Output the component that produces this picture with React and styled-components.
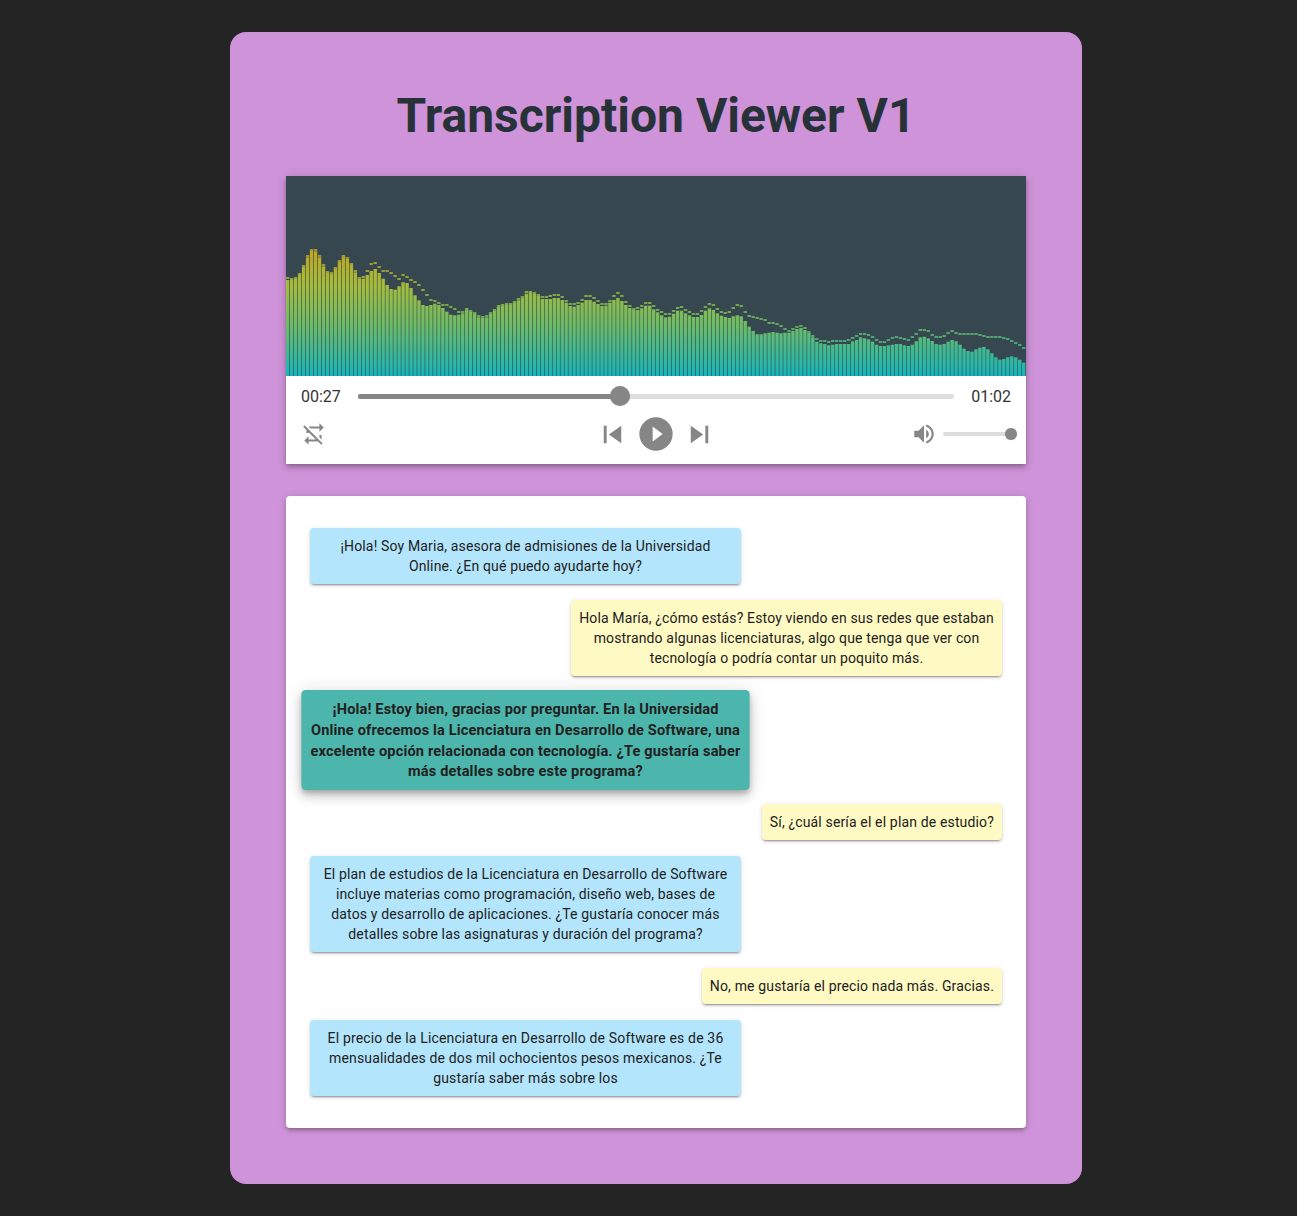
import styled, { createGlobalStyle } from "styled-components";

const GlobalStyle = createGlobalStyle`
  html, body { margin: 0; padding: 0; }
  body {
    background: #242424;
    font-family: Roboto, "Liberation Sans", Arial, sans-serif;
    color: #212121;
  }
`;

const barHeights = [
  96, 97.7, 99, 103.3, 111, 120.7, 127.3, 126.7, 120.7, 111.7, 105, 104, 109, 116, 121.3, 119, 113.3, 105.7, 97.3, 97.3,
  101, 105, 107, 103, 97.3, 91, 87, 86.3, 89.7, 93.7, 93, 88, 80.7, 75.7, 71, 70, 71, 72.3, 71, 68,
  64.3, 61.3, 60.7, 61.3, 64.7, 68, 66.3, 64.7, 61.3, 60, 60, 64, 67, 71, 72.3, 73.3, 73.3, 75, 77.7, 79.3,
  82.3, 83.3, 82, 80, 77, 77, 77, 78, 78, 76, 73.3, 70, 69.3, 71, 73.3, 76, 76, 74.3, 72, 70,
  70.3, 73.3, 76, 78, 75, 71, 68, 66, 66, 67.7, 70.3, 70.3, 66.7, 63.7, 60.7, 58.7, 59.3, 62.3, 65.3, 65.3,
  62.7, 60.7, 59, 59, 61, 65.3, 67.7, 66, 62.7, 60.3, 59, 58, 59.7, 60.7, 59.7, 55, 49.3, 45, 41.7, 41.7,
  42.7, 43.3, 44, 43.3, 42.7, 43.3, 43.3, 45, 47, 48, 46, 44, 38.7, 34.3, 32.7, 32, 30.7, 31.3, 32, 32,
  32, 32, 34.7, 36, 38.7, 37.7, 36.7, 34.3, 31.3, 30, 30, 30.7, 31.3, 32, 32, 30.7, 30, 31.3, 34.7, 38.7,
  39.3, 37.7, 35, 32, 31.3, 32, 34.3, 36, 34.7, 31.3, 27.3, 25, 24.3, 26.7, 28.3, 29, 26.7, 22.7, 18.7, 16.3,
  17, 18.7, 19.7, 18.7, 16.3, 13.3,
];

const capHeights = [
  99.3, 98.3, 99, 103.3, 111, 120.7, 127.3, 126.7, 120.7, 111.7, 105, 104, 109, 116, 121.3, 119, 113.3, 105.7, 99, 100,
  106.3, 112.7, 114.3, 109.7, 105.7, 106.3, 104, 100.7, 98.3, 101.7, 100, 97, 95.3, 92.3, 87.3, 82, 76.7, 75.7, 74, 72,
  72, 70, 68, 64.7, 64.7, 68, 66, 64, 60.7, 60, 60.7, 64, 67, 71, 72.3, 73.3, 73.3, 75, 77.7, 80,
  85, 85.3, 84.3, 82, 80, 79.7, 80.7, 82, 82, 80.3, 76.3, 73.3, 72.7, 74.3, 77.3, 80.7, 80.7, 79, 76, 72.7,
  72.7, 76.3, 81.3, 83.7, 80.7, 74.7, 71, 68, 68.7, 71, 74, 74, 71, 67, 64.7, 63, 63, 66.3, 68.7, 69.7,
  67.3, 64.7, 63, 63, 66.3, 70.3, 73.3, 72, 68, 65.3, 64, 64.7, 68.7, 72, 71.3, 65.3, 61, 60, 59, 58.3,
  57, 54.3, 53.7, 53, 50.7, 48, 46, 47.7, 50, 50.7, 49, 45, 41.3, 38, 36.3, 35.7, 34.7, 35.7, 36.3, 36.3,
  36.3, 37.3, 38.7, 41, 42.7, 42.7, 42, 39.7, 36.7, 34.7, 34.7, 37.3, 38.7, 39.7, 38.7, 38, 37.3, 39.7, 43.3, 46.7,
  46.7, 46, 42, 39.7, 40.3, 41.3, 44, 46, 44, 43.3, 43.3, 43, 42.7, 42.7, 42, 41, 40.3, 40.3, 40.3, 39.7,
  38.7, 38, 35.7, 34.3, 31.7, 29,
];

const messages = [
  { side: "agent", text: "¡Hola! Soy Maria, asesora de admisiones de la Universidad Online. ¿En qué puedo ayudarte hoy?" },
  { side: "client", text: "Hola María, ¿cómo estás? Estoy viendo en sus redes que estaban mostrando algunas licenciaturas, algo que tenga que ver con tecnología o podría contar un poquito más." },
  { side: "agent", active: true, text: "¡Hola! Estoy bien, gracias por preguntar. En la Universidad Online ofrecemos la Licenciatura en Desarrollo de Software, una excelente opción relacionada con tecnología. ¿Te gustaría saber más detalles sobre este programa?" },
  { side: "client", text: "Sí, ¿cuál sería el el plan de estudio?" },
  { side: "agent", text: "El plan de estudios de la Licenciatura en Desarrollo de Software incluye materias como programación, diseño web, bases de datos y desarrollo de aplicaciones. ¿Te gustaría conocer más detalles sobre las asignaturas y duración del programa?" },
  { side: "client", text: "No, me gustaría el precio nada más. Gracias." },
  { side: "agent", text: "El precio de la Licenciatura en Desarrollo de Software es de 36 mensualidades de dos mil ochocientos pesos mexicanos. ¿Te gustaría saber más sobre los" },
];

const Page = styled.div`
  display: flex;
  justify-content: center;
  padding: 32px 0 32px 15px;
`;

const Card = styled.main`
  width: 740px;
  padding: 56px;
  background: #ce93d8;
  border-radius: 16px;
`;

const Title = styled.h1`
  margin: 0 0 32px;
  font-size: 48px;
  line-height: 56px;
  font-weight: 700;
  text-align: center;
  color: #263238;
`;

const Player = styled.section`
  background: #fff;
  box-shadow: 0 2px 4px -1px rgba(0, 0, 0, 0.2), 0 4px 5px rgba(0, 0, 0, 0.14), 0 1px 10px rgba(0, 0, 0, 0.12);
  margin-bottom: 32px;
`;

const Spectrum = styled.svg`
  display: block;
  width: 740px;
  height: 200px;
  background: #37474f;
`;

const Controls = styled.div`
  display: flex;
  flex-direction: column;
  gap: 8px;
  padding: 10px 15px;
`;

const ProgressRow = styled.div`
  display: flex;
  align-items: center;
  height: 20px;
`;

const Time = styled.span`
  margin-top: 2px;
  font-size: 16px;
  line-height: 20px;
  color: #333;
`;

const Track = styled.div`
  position: relative;
  flex: 1;
  height: ${(p) => (p.$thin ? 4 : 5)}px;
  margin: 0 ${(p) => (p.$thin ? 0 : 17)}px;
  background: #ddd;
  border-radius: 2px;
`;

const Filled = styled.div`
  height: 100%;
  background: #868686;
  border-radius: 2px;
`;

const Thumb = styled.div`
  position: absolute;
  top: 50%;
  width: ${(p) => p.$size}px;
  height: ${(p) => p.$size}px;
  margin: ${(p) => -p.$size / 2}px 0 0 ${(p) => -p.$size / 2}px;
  background: #868686;
  border-radius: 50%;
  box-shadow: 0 0 1px rgba(134, 134, 134, 0.5);
`;

const ButtonRow = styled.div`
  display: flex;
  align-items: center;
  height: 40px;
`;

const Side = styled.div`
  flex: 1;
  display: flex;
  align-items: center;
  justify-content: ${(p) => (p.$end ? "flex-end" : "flex-start")};
`;

const Main = styled.div`
  display: flex;
  align-items: center;
  gap: 6px;
`;

const IconButton = styled.button`
  display: block;
  width: ${(p) => p.$size}px;
  height: ${(p) => p.$size}px;
  padding: 0;
  border: 0;
  background: none;
  color: #868686;
  cursor: pointer;
  svg {
    display: block;
    width: 100%;
    height: 100%;
    fill: currentColor;
  }
`;

const Volume = styled.div`
  display: flex;
  align-items: center;
  gap: 6px;
  width: 100px;
`;

const Chat = styled.section`
  padding: 24px 16px;
  background: #fff;
  border-radius: 4px;
  box-shadow: 0 3px 3px -2px rgba(0, 0, 0, 0.2), 0 3px 4px rgba(0, 0, 0, 0.14), 0 1px 8px rgba(0, 0, 0, 0.12);
`;

const Row = styled.div`
  display: flex;
  justify-content: ${(p) => (p.$side === "client" ? "flex-end" : "flex-start")};
`;

const bubbleColors = { agent: "#b3e5fc", client: "#fff9c4", active: "#4db6ac" };

const Bubble = styled.p`
  width: fit-content;
  max-width: 431px;
  box-sizing: border-box;
  margin: 8px;
  padding: 8px;
  font-size: 14px;
  line-height: 20px;
  letter-spacing: 0.15px;
  text-align: center;
  border-radius: 4px;
  background: ${(p) => bubbleColors[p.$active ? "active" : p.$side]};
  font-weight: ${(p) => (p.$active ? 700 : 400)};
  transform: ${(p) => (p.$active ? "scale(1.04)" : "none")};
  box-shadow: ${(p) =>
    p.$active
      ? "0 3px 5px -1px rgba(0,0,0,.2), 0 6px 10px rgba(0,0,0,.14), 0 1px 18px rgba(0,0,0,.12)"
      : "0 3px 1px -2px rgba(0,0,0,.2), 0 2px 2px rgba(0,0,0,.14), 0 1px 5px rgba(0,0,0,.12)"};
`;

function SpectrumChart() {
  const pitch = 740 / barHeights.length;
  return (
    <Spectrum viewBox="0 0 740 200">
      <defs>
        <linearGradient id="bars" gradientUnits="userSpaceOnUse" x1="0" y1="0" x2="0" y2="200">
          <stop offset="0.36" stopColor="#c0a420" />
          <stop offset="0.55" stopColor="#a4bc3c" />
          <stop offset="0.75" stopColor="#6cbc68" />
          <stop offset="1" stopColor="#14b6bc" />
        </linearGradient>
      </defs>
      {barHeights.map((h, i) => {
        const cap = capHeights[i];
        const top = Math.min(h, cap - 2);
        return (
          <g key={i} fill="url(#bars)">
            <rect x={i * pitch} y={200 - top} width={pitch - 0.6} height={top} />
            <rect x={i * pitch} y={200 - Math.round(cap)} width={pitch - 0.6} height={2} opacity={0.8} />
          </g>
        );
      })}
    </Spectrum>
  );
}

function AudioPlayer() {
  return (
    <Player>
      <SpectrumChart />
      <Controls>
        <ProgressRow>
          <Time>00:27</Time>
          <Track>
            <Filled style={{ width: "44%" }} />
            <Thumb $size={20} style={{ left: "44%" }} />
          </Track>
          <Time>01:02</Time>
        </ProgressRow>
        <ButtonRow>
          <Side>
            <IconButton $size={26} aria-label="Repeat">
              <svg viewBox="0 0 24 24">
                <path d="M2,5.27L3.28,4L20,20.72L18.73,22L15.73,19H7V22L3,18L7,14V17H13.73L7,10.27V11H5V8.27L2,5.27M17,13H19V17.18L17,15.18V13M17,5V2L21,6L17,10V7H8.82L6.82,5H17Z" />
              </svg>
            </IconButton>
          </Side>
          <Main>
            <IconButton $size={35} aria-label="Previous">
              <svg viewBox="0 0 24 24">
                <path d="M6,18V6H8V18H6M9.5,12L18,6V18L9.5,12Z" />
              </svg>
            </IconButton>
            <IconButton $size={40} aria-label="Play">
              <svg viewBox="0 0 24 24">
                <path d="M10,16.5V7.5L16,12M12,2A10,10 0 0,0 2,12A10,10 0 0,0 12,22A10,10 0 0,0 22,12A10,10 0 0,0 12,2Z" />
              </svg>
            </IconButton>
            <IconButton $size={35} aria-label="Next">
              <svg viewBox="0 0 24 24">
                <path d="M16,18H18V6H16M6,18L14.5,12L6,6V18Z" />
              </svg>
            </IconButton>
          </Main>
          <Side $end>
            <Volume>
              <IconButton $size={26} aria-label="Volume">
                <svg viewBox="0 0 24 24">
                  <path d="M14,3.23V5.29C16.89,6.15 19,8.83 19,12C19,15.17 16.89,17.84 14,18.7V20.77C18,19.86 21,16.28 21,12C21,7.72 18,4.14 14,3.23M16.5,12C16.5,10.23 15.5,8.71 14,7.97V16C15.5,15.29 16.5,13.76 16.5,12M3,9V15H7L12,20V4L7,9H3Z" />
                </svg>
              </IconButton>
              <Track $thin>
                <Thumb $size={12} style={{ left: "100%" }} />
              </Track>
            </Volume>
          </Side>
        </ButtonRow>
      </Controls>
    </Player>
  );
}

export default function App() {
  return (
    <>
      <GlobalStyle />
      <Page>
        <Card>
          <Title>Transcription Viewer V1</Title>
          <AudioPlayer />
          <Chat>
            {messages.map((m, i) => (
              <Row key={i} $side={m.side}>
                <Bubble $side={m.side} $active={m.active}>
                  {m.text}
                </Bubble>
              </Row>
            ))}
          </Chat>
        </Card>
      </Page>
    </>
  );
}
